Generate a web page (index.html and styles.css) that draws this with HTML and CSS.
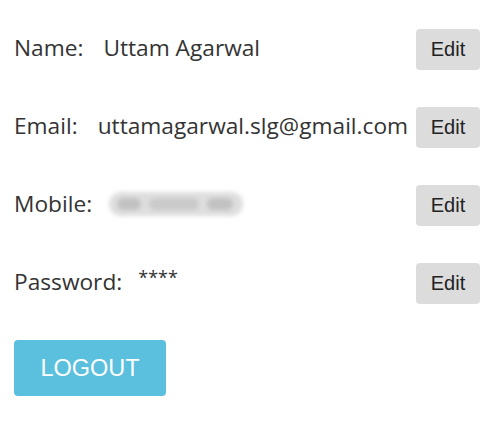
FILE: index.html
```html
<!DOCTYPE html>
<html>
<head>
<meta charset="utf-8">
<link rel="stylesheet" href="styles.css">
</head>
<body>
<div class="profile">
  <div class="row">
    <span class="label">Name:</span>
    <span class="value">Uttam Agarwal</span>
    <button class="edit">Edit</button>
  </div>
  <div class="row">
    <span class="label">Email:</span>
    <span class="value">uttamagarwal.slg@gmail.com</span>
    <button class="edit">Edit</button>
  </div>
  <div class="row">
    <span class="label">Mobile:</span>
    <span class="value blurred"><span class="blob b1"></span><span class="blob b2"></span><span class="blob b3"></span></span>
    <button class="edit">Edit</button>
  </div>
  <div class="row">
    <span class="label">Password:</span>
    <span class="value stars">****</span>
    <button class="edit">Edit</button>
  </div>
  <button class="logout">LOGOUT</button>
</div>
</body>
</html>
```
FILE: styles.css
```css
html, body {
  margin: 0;
  padding: 0;
  background: #ffffff;
}
.profile {
  padding: 29px 24px 0 14px;
  font-family: "Open Sans", "Noto Sans", sans-serif;
  font-size: 22.7px;
  color: #333333;
}
.row {
  display: flex;
  align-items: center;
  height: 41px;
  margin-bottom: 37px;
}
.label {
  display: block;
  margin-bottom: 5px;
}
.value {
  display: block;
  margin-left: 20px;
  margin-bottom: 5px;
}
.edit {
  margin-left: auto;
  flex-shrink: 0;
  width: 64px;
  height: 41px;
  border: none;
  border-radius: 4px;
  background: #dcdcdc;
  color: #222222;
  font-family: "Liberation Sans", Arial, sans-serif;
  font-size: 20px;
  padding: 0;
}
.blurred {
  display: flex;
  align-items: center;
  width: 134px;
  height: 24px;
  margin-left: 17px;
  margin-bottom: 4px;
  background: #dedede;
  border-radius: 12px;
  filter: blur(2px);
  gap: 8px;
  padding: 0 8px;
  box-sizing: border-box;
}
.blob {
  display: block;
  height: 12px;
  background: #c2c2c2;
  border-radius: 6px;
}
.b1 { width: 24px; }
.b2 { width: 50px; background: #cacaca; }
.b3 { width: 26px; }
.stars {
  font-size: 18px;
  margin-left: 16px;
  margin-bottom: 14px;
}
.logout {
  display: block;
  margin-top: -1px;
  width: 152px;
  height: 56px;
  border: none;
  border-radius: 4px;
  background: #5bc0de;
  color: #ffffff;
  font-family: "Liberation Sans", Arial, sans-serif;
  font-size: 23.5px;
  padding: 0;
}
```
